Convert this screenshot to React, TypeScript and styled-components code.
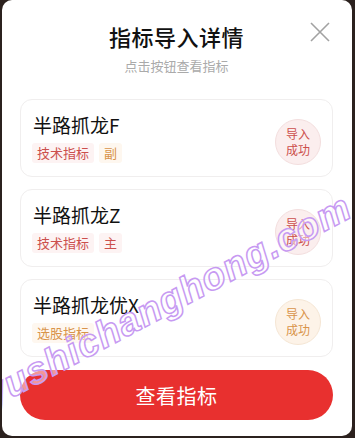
import React from 'react';
import styled, { createGlobalStyle } from 'styled-components';

type Tone = 'red' | 'orange';

const GlobalStyle = createGlobalStyle`
  html, body {
    margin: 0;
    padding: 0;
    background: #2b211e;
  }
  body {
    font-family: "Noto Sans CJK SC", "Noto Sans", sans-serif;
  }
`;

const tones = {
  red: { text: '#cc4f4c', bg: '#fdf3f3', badge: '#fbeeee', ring: '#f3dede' },
  orange: { text: '#d9944a', bg: '#fef7ef', badge: '#fdf3e8', ring: '#f5e6d4' },
};

const items: { name: string; tags: { label: string; tone: Tone }[]; tone: Tone }[] = [
  { name: '半路抓龙F', tags: [{ label: '技术指标', tone: 'red' }, { label: '副', tone: 'orange' }], tone: 'red' },
  { name: '半路抓龙Z', tags: [{ label: '技术指标', tone: 'red' }, { label: '主', tone: 'red' }], tone: 'red' },
  { name: '半路抓龙优X', tags: [{ label: '选股指标', tone: 'orange' }], tone: 'orange' },
];

const App: React.FC = () => {
  return (
    <>
      <GlobalStyle />
      <Screen>
        <Panel>
          <CloseButton aria-label="close">
            <svg width="20" height="20" viewBox="0 0 20 20">
              <path d="M1 1 L19 19 M19 1 L1 19" stroke="#a2a2a2" strokeWidth="1.6" fill="none" />
            </svg>
          </CloseButton>
          <Header>
            <Title>指标导入详情</Title>
            <Subtitle>点击按钮查看指标</Subtitle>
          </Header>
          <List>
            {items.map((item) => (
              <Card key={item.name}>
                <Info>
                  <Name>{item.name}</Name>
                  <Tags>
                    {item.tags.map((tag) => (
                      <Tag key={tag.label} tone={tag.tone}>
                        {tag.label}
                      </Tag>
                    ))}
                  </Tags>
                </Info>
                <Badge tone={item.tone}>
                  导入
                  <br />
                  成功
                </Badge>
              </Card>
            ))}
          </List>
          <ViewButton>查看指标</ViewButton>
          <Watermark>yushichanghong.com</Watermark>
        </Panel>
      </Screen>
    </>
  );
};

const Screen = styled.div`
  width: 355px;
  height: 438px;
  overflow: hidden;
  padding-left: 2px;
  box-sizing: border-box;
`;

const Panel = styled.div`
  position: relative;
  width: 350px;
  height: 436px;
  box-sizing: border-box;
  padding: 0 19px 0 18px;
  background: #fff;
  border-radius: 10px;
  overflow: hidden;
  display: flex;
  flex-direction: column;
`;

const CloseButton = styled.div`
  position: absolute;
  top: 22px;
  right: 22px;
  width: 20px;
  height: 20px;
  line-height: 0;
`;

const Header = styled.div`
  height: 99px;
  display: flex;
  flex-direction: column;
  align-items: center;
  padding-top: 21px;
  box-sizing: border-box;
`;

const Title = styled.div`
  font-size: 22px;
  line-height: 30px;
  font-weight: 500;
  color: #111;
  letter-spacing: 0.5px;
`;

const Subtitle = styled.div`
  margin-top: 6px;
  font-size: 13px;
  line-height: 18px;
  color: #aaa;
`;

const List = styled.div`
  display: flex;
  flex-direction: column;
  gap: 12px;
`;

const Card = styled.div`
  height: 78px;
  box-sizing: border-box;
  border: 1px solid #f0eeee;
  border-radius: 12px;
  padding: 12px 11px 0 12px;
  display: flex;
  align-items: center;
  justify-content: space-between;
`;

const Info = styled.div`
  align-self: flex-start;
  display: flex;
  flex-direction: column;
`;

const Name = styled.div`
  font-size: 19px;
  line-height: 26px;
  color: #111;
`;

const Tags = styled.div`
  margin-top: 5px;
  display: flex;
  gap: 6px;
`;

const Tag = styled.span<{ tone: Tone }>`
  height: 20px;
  line-height: 20px;
  padding: 0 5px;
  margin-left: -1px;
  border-radius: 3px;
  font-size: 13px;
  color: ${({ tone }) => tones[tone].text};
  background: ${({ tone }) => tones[tone].bg};
`;

const Badge = styled.div<{ tone: Tone }>`
  width: 46px;
  height: 46px;
  margin-top: -4px;
  box-sizing: border-box;
  border-radius: 50%;
  border: 1px solid ${({ tone }) => tones[tone].ring};
  background: ${({ tone }) => tones[tone].badge};
  color: ${({ tone }) => tones[tone].text};
  font-size: 12px;
  line-height: 16px;
  display: flex;
  align-items: center;
  justify-content: center;
  text-align: center;
`;

const ViewButton = styled.div`
  margin-top: 13px;
  height: 50px;
  border-radius: 25px;
  background: #e8302f;
  color: #fff;
  font-size: 20px;
  display: flex;
  align-items: center;
  justify-content: center;
  letter-spacing: 0.5px;
`;

const Watermark = styled.div`
  position: absolute;
  left: -16px;
  top: 376px;
  transform: rotate(-28deg);
  transform-origin: left center;
  font-family: "Liberation Sans", Arial, sans-serif;
  font-size: 38px;
  font-weight: 700;
  font-style: italic;
  letter-spacing: 1px;
  color: rgba(255, 255, 255, 0.5);
  -webkit-text-stroke: 1.5px #c79af2;
  white-space: nowrap;
  pointer-events: none;
`;

export default App;
